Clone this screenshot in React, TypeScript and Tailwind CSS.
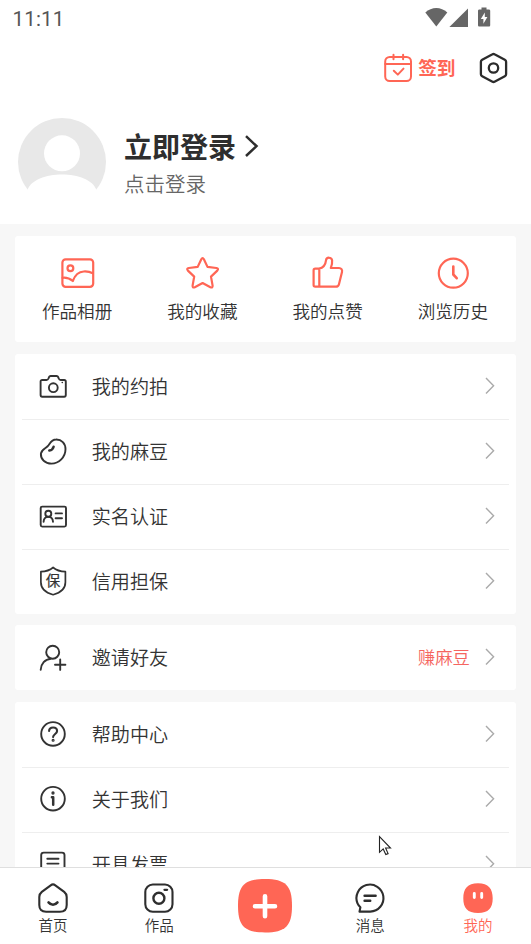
import React from 'react';

type Item = { label: string; icon: React.ReactNode; extra?: string };

// Outline icon used in the menu rows
function LineIcon({ children }: { children: React.ReactNode }) {
  return (
    <svg className="w-8 h-8 shrink-0" viewBox="0 0 32 32" fill="none" stroke="#333333" strokeWidth={1.9} strokeLinecap="round" strokeLinejoin="round">
      {children}
    </svg>
  );
}

function QuickIcon({ children }: { children: React.ReactNode }) {
  return (
    <svg className="w-9 h-9" viewBox="0 0 36 36" fill="none" stroke="#ff6655" strokeWidth={2.2} strokeLinecap="round" strokeLinejoin="round">
      {children}
    </svg>
  );
}

function TabIcon({ children }: { children: React.ReactNode }) {
  return (
    <svg className="w-8 h-8" viewBox="0 0 32 32" fill="none" stroke="#2e2e2e" strokeWidth={2.1} strokeLinecap="round" strokeLinejoin="round">
      {children}
    </svg>
  );
}

const quickItems: Item[] = [
  {
    label: '作品相册',
    icon: (
      <QuickIcon>
        <rect x="2.4" y="4.4" width="30.8" height="27.4" rx="3.2" />
        <circle cx="10.4" cy="13.2" r="2.9" />
        <path d="M2.6 22.8c3.6-.4 6.800.4 10.200 3.200 2.200-6 6.200-9.300 11-9.500 3.600-.2 6.400.4 9 1.700" />
      </QuickIcon>
    ),
  },
  {
    label: '我的收藏',
    icon: (
      <QuickIcon>
        <path d="M16.300 4.200q1.300-2.200 2.600 0l3.600 7.700 8.800 1.100q2.800.6 1 2.600l-6.300 6 1.600 9q.2 2.600-2.200 1.600l-7.800-4.200-7.800 4.200q-2.400 1-2.200-1.600l1.600-9-6.300-6q-1.800-2 1-2.600l8.800-1.100z" />
      </QuickIcon>
    ),
  },
  {
    label: '我的点赞',
    icon: (
      <QuickIcon>
        <path d="M9 13.600H5.200a1.600 1.600 0 0 0-1.600 1.600v14.900a1.600 1.600 0 0 0 1.600 1.600h20.600c1.800 0 2.700-.7 3.100-2.300l3.100-12.500c.5-2.200-.8-3.900-3-3.900h-8.200c1.200-3.400 1.600-5.600 1.300-7.600-.5-3.500-5.700-3.600-6.100-.1-.5 4.500-2.600 7.500-7 8.300zM9.300 13.800v17.700" />
      </QuickIcon>
    ),
  },
  {
    label: '浏览历史',
    icon: (
      <QuickIcon>
        <circle cx="18.300" cy="18.200" r="14.500" />
        <path d="M18.300 11.500v8l3.400 3.700" strokeWidth={2.600} />
      </QuickIcon>
    ),
  },
];

const orderItems: Item[] = [
  {
    label: '我的约拍',
    icon: (
      <LineIcon>
        <path d="M5.200 9h4.300c1.100 0 1.600-.5 2-1.500l.5-1.300c.3-.8.8-1.200 1.600-1.200h6c.8 0 1.300.4 1.600 1.200l.5 1.300c.4 1 .9 1.500 2 1.500h3.500c1 0 1.600.6 1.600 1.600v13.500c0 1-.6 1.600-1.600 1.600h-22c-1 0-1.600-.6-1.600-1.600V10.600C3.600 9.600 4.200 9 5.200 9z" />
        <circle cx="16.300" cy="16.700" r="4.400" />
        <path d="M25.200 11.600h.2" strokeWidth={1.500} />
      </LineIcon>
    ),
  },
  {
    label: '我的麻豆',
    icon: (
      <LineIcon>
        <path d="M3.900 17.800c.3-4.100 4.300-5.100 7-7.800 2.300-2.700 3.300-6.500 8.100-6.500 5.500-.2 9.500 4 9.500 9.600 0 8.200-6.600 14.500-14.100 14.500-6.200 0-10.900-4.300-10.500-9.800z" />
        <path d="M12.300 14.600c1.900-.3 3.800-1.900 4.300-3.900" strokeWidth={2.500} />
      </LineIcon>
    ),
  },
  {
    label: '实名认证',
    icon: (
      <LineIcon>
        <rect x="3.700" y="5.600" width="25.300" height="20" rx="1.500" />
        <circle cx="11.300" cy="12.800" r="3" />
        <path d="M6.600 20.800c.3-6.600 9.100-6.600 9.400 0M18.600 12.400h6.400M18.600 17.300h6.400" />
      </LineIcon>
    ),
  },
  {
    label: '信用担保',
    icon: (
      <LineIcon>
        <path d="M16.100 1.500c2.800 2.400 7 4 12.300 4.200v10.500c0 6.500-5.200 10.600-12.300 12.500C9 26.800 3.900 22.700 3.900 16.200V5.700C9.200 5.500 13.300 3.900 16.100 1.500z" strokeWidth={1.700} />
        <text x="16.100" y="20" textAnchor="middle" fontSize="14.500" fontWeight="400" fill="#333333" stroke="#333333" strokeWidth=".2">保</text>
      </LineIcon>
    ),
  },
];

const inviteItems: Item[] = [
  {
    label: '邀请好友',
    extra: '赚麻豆',
    icon: (
      <LineIcon>
        <circle cx="15.700" cy="10.200" r="6.500" />
        <path d="M3.700 27.700c.3-6 4.300-10.500 10-11M23.200 17.500v10.400M18 22.700h10.400" />
      </LineIcon>
    ),
  },
];

const helpItems: Item[] = [
  {
    label: '帮助中心',
    icon: (
      <LineIcon>
        <circle cx="16" cy="14.900" r="11.800" />
        <path d="M12.100 12c.1-4.600 7.900-4.700 8 0 0 2.900-4 3.100-4 6.100" strokeWidth={2.100} />
        <circle cx="16.100" cy="21.300" r=".6" />
      </LineIcon>
    ),
  },
  {
    label: '关于我们',
    icon: (
      <LineIcon>
        <circle cx="16" cy="14.700" r="11.800" />
        <path d="M14.900 13.200h1.300v7.500" strokeWidth={2.500} />
        <circle cx="16" cy="9" r=".7" />
      </LineIcon>
    ),
  },
  {
    label: '开具发票',
    icon: (
      <LineIcon>
        <rect x="4.200" y="3.600" width="23.300" height="24" rx="2.500" />
        <path d="M10.300 9.800h11.200M10.300 14.600h11.200" />
      </LineIcon>
    ),
  },
];

function MenuCard({ items }: { items: Item[] }) {
  return (
    <div className="bg-white rounded-[3px] px-[7px]">
      {items.map((item, i) => (
        <div key={item.label} className={`flex items-center h-[65px] pl-[15px] pr-[14px] border-t ${i === 0 ? 'border-transparent' : 'border-[#eeeeee]'}`}>
          {item.icon}
          <span className="ml-[22.700px] mb-0.5 flex-1 text-[19.100px] leading-7 font-[350] text-[#333333]">{item.label}</span>
          {item.extra && <span className="mr-[15px] mb-0.5 text-[17.400px] leading-6 font-[350] text-[#f56560]">{item.extra}</span>}
          <svg className="mb-0.5 w-[10px] h-[18px]" viewBox="0 0 10 18" fill="none" stroke="#aaaaaa" strokeWidth={1.400}>
            <path d="M1 1l7.600 7.800L1 16.600" />
          </svg>
        </div>
      ))}
    </div>
  );
}

function StatusBar() {
  return (
    <div className="flex items-center justify-between h-9 pl-[12.500px] pr-[39px]">
      <span className="font-[Roboto] font-normal text-[20.500px] leading-6 tracking-[0.200px] text-[#555555] mt-px">11:11</span>
      <svg className="w-[68px] h-9" viewBox="424 0 68 36" fill="#666666">
        <path d="M425.300 12.600c6.300-6.100 15.700-6.100 22 0l-11 14z" />
        <path d="M468 8.500V27h-18.600z" />
        <path fillRule="evenodd" d="M481.500 7.500h5v2h2.200c1 0 1.500.5 1.500 1.500v14c0 1-.5 1.500-1.500 1.500h-9.200c-1 0-1.500-.5-1.500-1.500V11c0-1 .5-1.500 1.500-1.500h2zM484.800 12.500l-4 6.500h2.600v4.700l4-6.700h-2.600z" />
      </svg>
    </div>
  );
}

function Header() {
  return (
    <header className="bg-white h-[224px]">
      <StatusBar />
      <div className="flex items-center justify-end h-16 pr-[21px]">
        <svg className="w-8 h-8" viewBox="0 0 32 32" fill="none" stroke="#ff6655" strokeWidth={2} strokeLinecap="round" strokeLinejoin="round">
          <rect x="3.200" y="5" width="25.800" height="24" rx="4.500" />
          <path d="M3.200 12h25.800M11.500 2.700v4.500M21.100 2.700v4.500" />
          <path d="M11.800 18.800l4 3.800 5.700-6" />
        </svg>
        <span className="ml-1 mb-0.5 text-[18.700px] leading-7 font-bold text-[#ff6655]">签到</span>
        <svg className="ml-[22.500px] w-8 h-8" viewBox="0 0 32 32" fill="none" stroke="#2b2b2b" strokeWidth={2.300} strokeLinejoin="round">
          <path d="M14.500 2.300q1-.6 2 0l10.300 5.500q1.300.7 1.300 2v12.400q0 1.300-1.300 2l-10.300 5.500q-1 .6-2 0L4.200 24.200q-1.300-.7-1.300-2V9.800q0-1.300 1.300-2z" />
          <circle cx="15.500" cy="16" r="4.700" />
        </svg>
      </div>
      <div className="flex pl-[18px] pt-[18px]">
        <svg className="w-[88px] h-[88px]" viewBox="0 0 88 88">
          <circle cx="44" cy="44" r="44" fill="#e8e8e8" />
          <circle cx="44" cy="35.300" r="18" fill="#ffffff" />
          <path d="M0 88V84l9.500-12C13 62 28 56.500 44 56.500S75 62 78.500 72L88 84v4z" fill="#ffffff" />
        </svg>
        <div className="ml-[18px] pt-2">
          <div className="flex items-center h-10">
            <span className="text-[28px] leading-10 font-bold text-[#2e2e2e]">立即登录</span>
            <svg className="ml-2 w-4 h-6" viewBox="0 0 16 24" fill="none" stroke="#2e2e2e" strokeWidth={2.500}>
              <path d="M2 2.200l10.500 9.900L2 22" />
            </svg>
          </div>
          <p className="text-[20.500px] leading-8 font-[350] text-[#666666] mt-px">点击登录</p>
        </div>
      </div>
    </header>
  );
}

const tabLabel = 'text-[14.500px] leading-5 mt-px font-[350]';

function TabBar() {
  return (
    <nav className="grid grid-cols-5 h-[77px] shrink-0 bg-white border-t border-[#dfdfdf] text-[#333333]">
      <div className="flex flex-col items-center pt-3.5">
        <TabIcon>
          <path d="M13.700 3.300q2.300-1.700 4.600 0l8.900 6.600q2.500 2 2.500 5v8q0 6.800-6.800 6.800H9.100q-6.800 0-6.800-6.800v-8q0-3 2.500-5z" />
          <path d="M11.500 20.400c2.400 3 6.600 3 9 0" strokeWidth={2.500} />
        </TabIcon>
        <span className={tabLabel}>首页</span>
      </div>
      <div className="flex flex-col items-center pt-3.5">
        <TabIcon>
          <rect x="2.300" y="2.500" width="27.200" height="27.200" rx="7.500" />
          <circle cx="15.900" cy="16.200" r="5.500" strokeWidth={2.400} />
          <path d="M21.500 7.800h2.600" strokeWidth={2.300} />
        </TabIcon>
        <span className={tabLabel}>作品</span>
      </div>
      <div className="flex flex-col items-center pt-[11px]">
        <svg className="w-[54px] h-[54px]" viewBox="0 0 54 54">
          <path d="M27 0c20.500 0 27 6.500 27 26.800S47.500 53.500 27 53.500 0 47 0 26.800 6.500 0 27 0z" fill="#ff6655" />
          <path d="M27 17.200v20M17 27.200h20" stroke="#ffffff" strokeWidth={4.600} strokeLinecap="round" />
        </svg>
      </div>
      <div className="flex flex-col items-center pt-3.5 pr-[3px]">
        <TabIcon>
          <path d="M5.500 29.600h10.800A13.500 13.500 0 1 0 3.500 21.300c.6 1.400 1.400 2.600 2.900 3.900z" />
          <path d="M10.600 13.700h11M10.600 18.700h5.600" strokeWidth={2.500} />
        </TabIcon>
        <span className={tabLabel}>消息</span>
      </div>
      <div className="flex flex-col items-center pt-3.5 text-[#ff6655]">
        <svg className="w-8 h-8" viewBox="0 0 32 32">
          <path d="M16 1.200c10.500 0 14.700 5.500 14.700 15C30.700 26 26.500 31 16 31S1.300 26 1.300 16.200c0-9.500 4.200-15 14.700-15z" fill="#ff6655" />
          <path d="M12.300 11.500v4M19.700 11.500v4" stroke="#ffffff" strokeWidth={2.900} strokeLinecap="round" />
        </svg>
        <span className={tabLabel}>我的</span>
      </div>
    </nav>
  );
}

export default function App() {
  return (
    <div className="relative flex flex-col w-[531px] h-[944px] overflow-hidden bg-[#f7f7f7] font-['Noto_Sans_CJK_SC',sans-serif]">
      <main className="flex-1 min-h-0 overflow-hidden">
        <Header />
        <div className="px-[15px] pt-3">
          {/* Shortcuts */}
          <div className="grid grid-cols-4 h-[106px] mb-3 bg-white rounded-[3px]">
            {quickItems.map((item) => (
              <div key={item.label} className="flex flex-col items-center pt-[19px]">
                {item.icon}
                <span className="mt-2 mr-px text-[17.600px] leading-6 font-[350] text-[#333333]">{item.label}</span>
              </div>
            ))}
          </div>
          <div className="flex flex-col">
            <MenuCard items={orderItems} />
            <div className="mt-[11px] mb-3">
              <MenuCard items={inviteItems} />
            </div>
            <MenuCard items={helpItems} />
          </div>
        </div>
      </main>
      <TabBar />

      {/* Mouse pointer */}
      <svg className="absolute left-[378px] top-[835px] w-[15px] h-[22px]" viewBox="0 0 15 22" fill="#ffffff" stroke="#222222" strokeWidth={1.100}>
        <path d="M1.500 1.500v15.800l3.700-3.400 2.600 5.700 2.300-1-2.500-5.600h4.900z" />
      </svg>
    </div>
  );
}
